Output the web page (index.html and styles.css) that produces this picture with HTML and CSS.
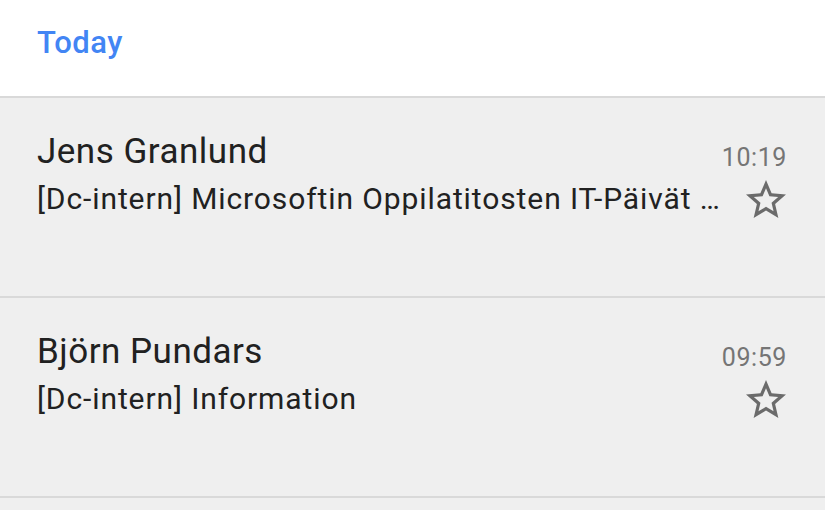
FILE: index.html
```html
<!DOCTYPE html>
<html lang="en">
<head>
    <meta charset="UTF-8">
    <meta name="viewport" content="width=device-width, initial-scale=1.0">
    <title>Inbox</title>
    <link rel="stylesheet" href="styles.css">
</head>
<body>
    <div class="section-header">Today</div>

    <!-- Mail list -->
    <div class="mail-list">
        <div class="mail-row">
            <div class="mail-body">
                <div class="sender">Jens Granlund</div>
                <div class="subject">[Dc-intern] Microsoftin Oppilatitosten IT-Päivät …</div>
            </div>
            <div class="mail-meta">
                <div class="time">10:19</div>
                <svg class="star" viewBox="0 0 24 24" width="48" height="48">
                    <path d="M22 9.24l-7.19-.62L12 2 9.19 8.63 2 9.24l5.46 4.73L5.82 21 12 17.27 18.18 21l-1.63-7.03L22 9.24zM12 15.4l-3.76 2.27 1-4.28-3.32-2.88 4.38-.38L12 6.1l1.71 4.04 4.38.38-3.32 2.88 1 4.28L12 15.4z"/>
                </svg>
            </div>
        </div>

        <div class="mail-row">
            <div class="mail-body">
                <div class="sender">Björn Pundars</div>
                <div class="subject">[Dc-intern] Information</div>
            </div>
            <div class="mail-meta">
                <div class="time">09:59</div>
                <svg class="star" viewBox="0 0 24 24" width="48" height="48">
                    <path d="M22 9.24l-7.19-.62L12 2 9.19 8.63 2 9.24l5.46 4.73L5.82 21 12 17.27 18.18 21l-1.63-7.03L22 9.24zM12 15.4l-3.76 2.27 1-4.28-3.32-2.88 4.38-.38L12 6.1l1.71 4.04 4.38.38-3.32 2.88 1 4.28L12 15.4z"/>
                </svg>
            </div>
        </div>

        <div class="mail-row"></div>
    </div>
</body>
</html>
```

FILE: styles.css
```css
body {
    margin: 0;
    font-family: Roboto, "Liberation Sans", sans-serif;
    background-color: #efefef;
    overflow: hidden;
}

.section-header {
    height: 98px;
    box-sizing: border-box;
    padding: 23px 0 0 37px;
    background-color: #fff;
    border-bottom: 2px solid #d9d9d9;
    color: #4285f4;
    font-size: 31px;
    font-weight: 500;
    line-height: 40px;
    letter-spacing: 0.5px;
}

.mail-row {
    display: flex;
    height: 200px;
    box-sizing: border-box;
    padding: 0 35px 0 37px;
    border-bottom: 2px solid #d9d9d9;
    background-color: #efefef;
}

.mail-body {
    flex: 1;
    min-width: 0;
    padding-top: 34px;
}

.sender {
    font-size: 35px;
    line-height: 40px;
    letter-spacing: 0.5px;
    color: #212121;
}

.subject {
    margin-top: 9px;
    font-size: 30px;
    line-height: 36px;
    letter-spacing: 0.9px;
    color: #212121;
    white-space: nowrap;
    overflow: hidden;
    text-overflow: ellipsis;
}

.mail-meta {
    display: flex;
    flex-direction: column;
    align-items: flex-end;
    padding-top: 45px;
}

.time {
    margin-right: 3px;
    font-size: 25px;
    line-height: 30px;
    letter-spacing: 0.6px;
    color: #757575;
}

.star {
    margin-top: 3px;
    fill: #6b6b6b;
}
```
